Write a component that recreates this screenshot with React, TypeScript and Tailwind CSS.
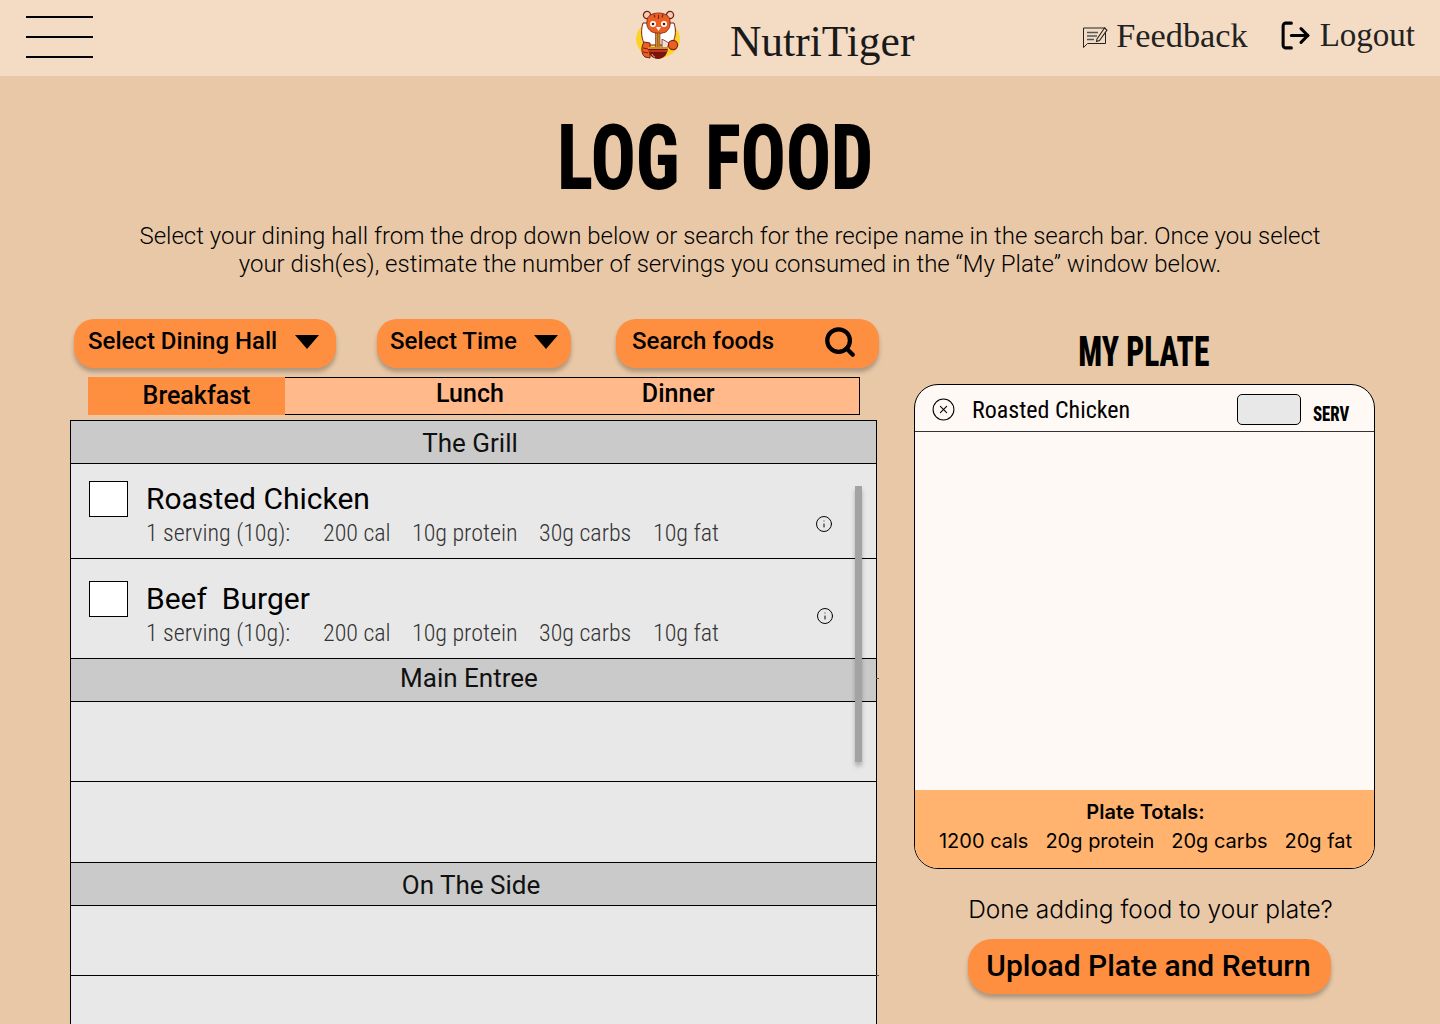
import { CircleX, Info, LogOut, Search } from "lucide-react";

const ROBOTO = "font-['Roboto',sans-serif]";
const SERIF = "font-['Liberation_Serif',serif]";
const INTER = "font-['Inter',sans-serif]";

function TigerLogo() {
  return (
    <svg width="46" height="52" viewBox="0 0 46 52" aria-hidden="true">
      <ellipse cx="23" cy="30" rx="22" ry="19" fill="#fdd32a" />
      <circle cx="12" cy="6" r="3.6" fill="#f3cdb4" stroke="#7a1f14" strokeWidth="1.3" />
      <circle cx="35" cy="6" r="3.6" fill="#f3cdb4" stroke="#7a1f14" strokeWidth="1.3" />
      {/* mane */}
      <path d="M8 14c-2 6-2 14 1 20l5 2h19l5-3c3-6 3-13 1-19Z" fill="#fff" stroke="#7a1f14" strokeWidth="1" />
      {/* body and paw */}
      <path d="M9 33c-3 5-3 12 1 15l5 1V34Z" fill="#ec5f22" stroke="#7a1f14" strokeWidth="1" />
      <path d="M8 39l5 1M8 43l5 1" stroke="#7a1f14" strokeWidth="1" />
      <path d="M27 30l7 4-2 6h-5Z" fill="#efe0d6" stroke="#7a1f14" strokeWidth=".8" />
      <circle cx="38" cy="36" r="4.6" fill="#ec5f22" stroke="#7a1f14" strokeWidth="1.1" />
      {/* head */}
      <path d="M12 12c0-5 5-8 11.500-8S35 7 35 12c1 6-2 9-4 11l-7 2-7-2c-3-2-6-5-5-11Z" fill="#ec5f22" stroke="#7a1f14" strokeWidth=".8" />
      <circle cx="18" cy="15" r="3" fill="#fff" />
      <circle cx="29" cy="15" r="3" fill="#fff" />
      <circle cx="18" cy="15" r="1.300" fill="#4a1208" />
      <circle cx="29" cy="15" r="1.300" fill="#4a1208" />
      <path d="M21 18h5l-2.500 4Z" fill="#fff" />
      <path d="M23.500 6v4M19 5.500l1 3M28 5.500l-1 3" stroke="#7a1f14" strokeWidth="1.100" />
      <path d="M14 23c3 3 6 4 9.500 4s7-1 9.500-4l-2 7H16Z" fill="#fff" />
      {/* noodles */}
      <rect x="20.500" y="24" width="4.500" height="15" fill="#c8902f" stroke="#7a1f14" strokeWidth=".6" />
      <path d="M22.700 24v15" stroke="#7a1f14" strokeWidth=".5" />
      {/* bowl */}
      <path d="M13 38h20c0 7-4 12-10 12s-10-5-10-12Z" fill="#7a1409" />
      <path d="M13 38h20v2H13Z" fill="#c8902f" />
      <path d="M13.500 42h19" stroke="#e5482c" strokeWidth="1.300" />
      <path d="M17 45c1 2 2 3 3 3" stroke="#fff" strokeWidth=".7" fill="none" />
    </svg>
  );
}

function FeedbackIcon() {
  return (
    <svg width="26" height="24" viewBox="0 0 26 24" fill="none" aria-hidden="true">
      <path d="M1.500 3h22v15.500H5.500L1.500 22.500Z" stroke="#222" strokeWidth="1" />
      <path d="M5 7.500h11M5 11h10M5 14.500h7" stroke="#555" strokeWidth="1.400" />
      <path d="M15 14l7.500-11 2.500 2-7.500 10.500-3 1Z" stroke="#222" strokeWidth="1.100" fill="#f4dcc4" />
    </svg>
  );
}

function Header() {
  return (
    <header className="flex h-[76px] items-center bg-[#f4dcc4] pl-[26px] pr-[25px]">
      <div className="-mt-[2px] flex w-[67px] flex-col gap-[18.5px]">
        <div className="h-[1.5px] bg-black" />
        <div className="h-[1.5px] bg-black" />
        <div className="h-[1.5px] bg-black" />
      </div>
      <div className="ml-[542px] flex w-[448px] items-center">
        <div className="-mt-[6px]">
          <TigerLogo />
        </div>
        <span className={`${SERIF} ml-[49px] mt-[7px] text-[43.5px] leading-none text-[#1a1a1a]`}>NutriTiger</span>
      </div>
      <div className="-mt-[5px] ml-auto flex items-center">
        <div className="mt-[4px]">
          <FeedbackIcon />
        </div>
        <span className={`${SERIF} ml-[8px] text-[34.3px] leading-none text-[#222]`}>Feedback</span>
        <LogOut size={33} strokeWidth={2.2} className="ml-[31.5px] text-black" />
        <span className={`${SERIF} ml-[7.5px] text-[33px] leading-none text-[#222]`}>Logout</span>
      </div>
    </header>
  );
}

function PillButton({ label, className, textClass, iconClass, icon }: { label: string; className: string; textClass: string; iconClass: string; icon: "arrow" | "search" }) {
  return (
    <div className={`flex h-[49px] items-center rounded-[20px] bg-[#ff8f40] pb-[4px] shadow-[0_4px_4px_rgba(0,0,0,0.25)] ${className}`}>
      <span className={`${ROBOTO} text-[24px] font-medium leading-none text-black ${textClass}`}>{label}</span>
      {icon === "arrow" ? (
        <svg width="24" height="14" viewBox="0 0 24 14" className={`ml-auto ${iconClass}`} aria-hidden="true">
          <path d="M0 0h24L12 14Z" fill="#000" />
        </svg>
      ) : (
        <Search size={34} strokeWidth={3} className={`ml-auto ${iconClass}`} />
      )}
    </div>
  );
}

function Nutrients({ serving, values }: { serving: string; values: string[] }) {
  return (
    <div className={`${ROBOTO} mt-[2px] flex text-[24px] font-light leading-[28px] text-[#333] font-stretch-condensed`}>
      <span className="w-[177px]">{serving}</span>
      <span className="w-[89px]">{values[0]}</span>
      <span className="w-[127px]">{values[1]}</span>
      <span className="w-[114px]">{values[2]}</span>
      <span>{values[3]}</span>
    </div>
  );
}

function FoodRow({ name, rowClass, infoClass }: { name: string; rowClass: string; infoClass: string }) {
  return (
    <div className={`relative flex border-b border-black pl-[18px] ${rowClass}`}>
      <div className="h-[36px] w-[39px] shrink-0 border border-black bg-white" />
      <div className="ml-[18px]">
        <div className={`${ROBOTO} whitespace-pre text-[30px] leading-[36px] text-black`}>{name}</div>
        <Nutrients serving="1 serving (10g):" values={["200 cal", "10g protein", "30g carbs", "10g fat"]} />
      </div>
      <Info size={18} strokeWidth={1.3} className={`absolute text-black ${infoClass}`} />
    </div>
  );
}

function SectionHeader({ label, shift }: { label: string; shift: string }) {
  return (
    <div className={`${ROBOTO} flex h-[43px] items-center justify-center border-b border-black bg-[#cacaca] text-[26px] text-[#111] ${shift}`}>
      {label}
    </div>
  );
}

function FoodTable() {
  return (
    <div className="relative mt-[5px] h-[700px] w-[807px] border border-black bg-[#e8e8e8]">
      <SectionHeader label="The Grill" shift="pr-[7px] pt-[2px]" />
      <FoodRow name="Roasted Chicken" rowClass="h-[95px] pt-[17px]" infoClass="left-[744px] top-[51px]" />
      <FoodRow name="Beef  Burger" rowClass="h-[100px] pt-[22px]" infoClass="left-[745px] top-[48px]" />
      <SectionHeader label="Main Entree" shift="pr-[9px] pb-[4px]" />
      <div className="h-[80px] border-b border-black" />
      <div className="h-[81px] border-b border-black" />
      <SectionHeader label="On The Side" shift="pr-[5px] pt-[2px]" />
      <div className="h-[70px] border-b border-black" />
      <div className="absolute left-[784px] top-[65px] h-[276px] w-[7px] bg-[#a3a3a3] shadow-[0_4px_4px_rgba(0,0,0,0.25)]" />
      <div className="absolute left-[805px] top-[257px] h-px w-[3px] bg-[#555]" />
      <div className="absolute left-[805px] top-[554px] h-px w-[3px] bg-[#555]" />
    </div>
  );
}

function MyPlate() {
  return (
    <section className="ml-[35px] w-[461px]">
      <h2 className={`${ROBOTO} mt-[10px] h-[55px] scale-x-[0.75] pr-[2px] text-center text-[42px] font-extrabold leading-[46px] text-black font-stretch-condensed`}>MY PLATE</h2>
      <div className="flex h-[485px] flex-col overflow-hidden rounded-[24px] border border-black bg-[#fef9f5]">
        <div className="flex h-[47px] shrink-0 items-center border-b border-[#333] pl-[16px] pt-[3px]">
          <CircleX size={25} strokeWidth={1} className="text-black" />
          <span className={`${ROBOTO} ml-[16px] text-[24px] leading-none text-black font-stretch-condensed`}>Roasted Chicken</span>
          <div className="ml-auto h-[31px] w-[64px] rounded-[5px] border border-black bg-[#e8e8e8]" />
          <span className={`${ROBOTO} ml-[5px] mr-[25px] mt-[8px] origin-right scale-x-[0.84] text-[20px] font-extrabold leading-none text-black font-stretch-condensed`}>SERV</span>
        </div>
        <div className="flex-1" />
        <div className={`${INTER} h-[78px] shrink-0 bg-[#ffb36f] pl-[2px] pt-[10px] text-center text-black`}>
          <div className="text-[20px] font-semibold leading-[24px]">Plate Totals:</div>
          <div className="mt-[5px] flex justify-center gap-[17px] text-[20px] leading-[24px]">
            <span>1200 cals</span>
            <span>20g protein</span>
            <span>20g carbs</span>
            <span>20g fat</span>
          </div>
        </div>
      </div>
      <p className={`${INTER} mt-[25px] pl-[12px] text-center text-[24.500px] font-light leading-[30px] text-black`}>Done adding food to your plate?</p>
      <div className="mt-[15px] flex justify-center pl-[10px]">
        <div className={`${ROBOTO} flex h-[55px] w-[363px] items-center justify-center rounded-[24px] bg-[#ff8f40] pb-[2px] pr-[2px] text-[30px] font-medium leading-none text-black shadow-[0_4px_4px_rgba(0,0,0,0.25)]`}>
          Upload Plate and Return
        </div>
      </div>
    </section>
  );
}

export default function App() {
  return (
    <div className="h-[1024px] w-[1440px] overflow-hidden bg-[#e9c8a7]">
      <Header />
      <main>
        <h1 className={`${ROBOTO} pr-[10px] pt-[33px] text-center text-[90px] font-extrabold leading-[100px] text-black font-stretch-condensed`}>
          <span className="inline-block scale-x-[0.83] [word-spacing:10px]">LOG FOOD</span>
        </h1>
        <p className={`${ROBOTO} mx-auto mt-[13px] w-[1200px] translate-x-[10px] text-center text-[24px] font-light leading-[28px] text-black`}>
          Select your dining hall from the drop down below or search for the recipe name in the search bar. Once you select your dish(es), estimate the number of servings you consumed in the “My Plate” window below.
        </p>
        <div className="mt-[41px] flex pl-[70px]">
          <div className="w-[809px]">
            <div className="flex pl-[4px]">
              <PillButton label="Select Dining Hall" className="w-[262px]" textClass="ml-[14px] mb-px" iconClass="mr-[17px]" icon="arrow" />
              <PillButton label="Select Time" className="ml-[41px] w-[194px]" textClass="ml-[13px] mb-px" iconClass="mr-[13px]" icon="arrow" />
              <PillButton label="Search foods" className="ml-[45px] w-[263px]" textClass="ml-[16px] mb-px" iconClass="mr-[22px]" icon="search" />
            </div>
            <div className={`${ROBOTO} relative ml-[18px] mt-[9px] flex h-[38px] w-[772px] border border-black bg-[#ffb98a] text-[25px] font-medium text-black`}>
              <div className="-m-px flex h-[38px] w-[197px] items-center justify-center bg-[#ff8f40] pl-[20px]">Breakfast</div>
              <div className="ml-[152px] flex items-center pb-[4px]">Lunch</div>
              <div className="ml-[138px] flex items-center pb-[4px]">Dinner</div>
            </div>
            <FoodTable />
          </div>
          <MyPlate />
        </div>
      </main>
    </div>
  );
}
